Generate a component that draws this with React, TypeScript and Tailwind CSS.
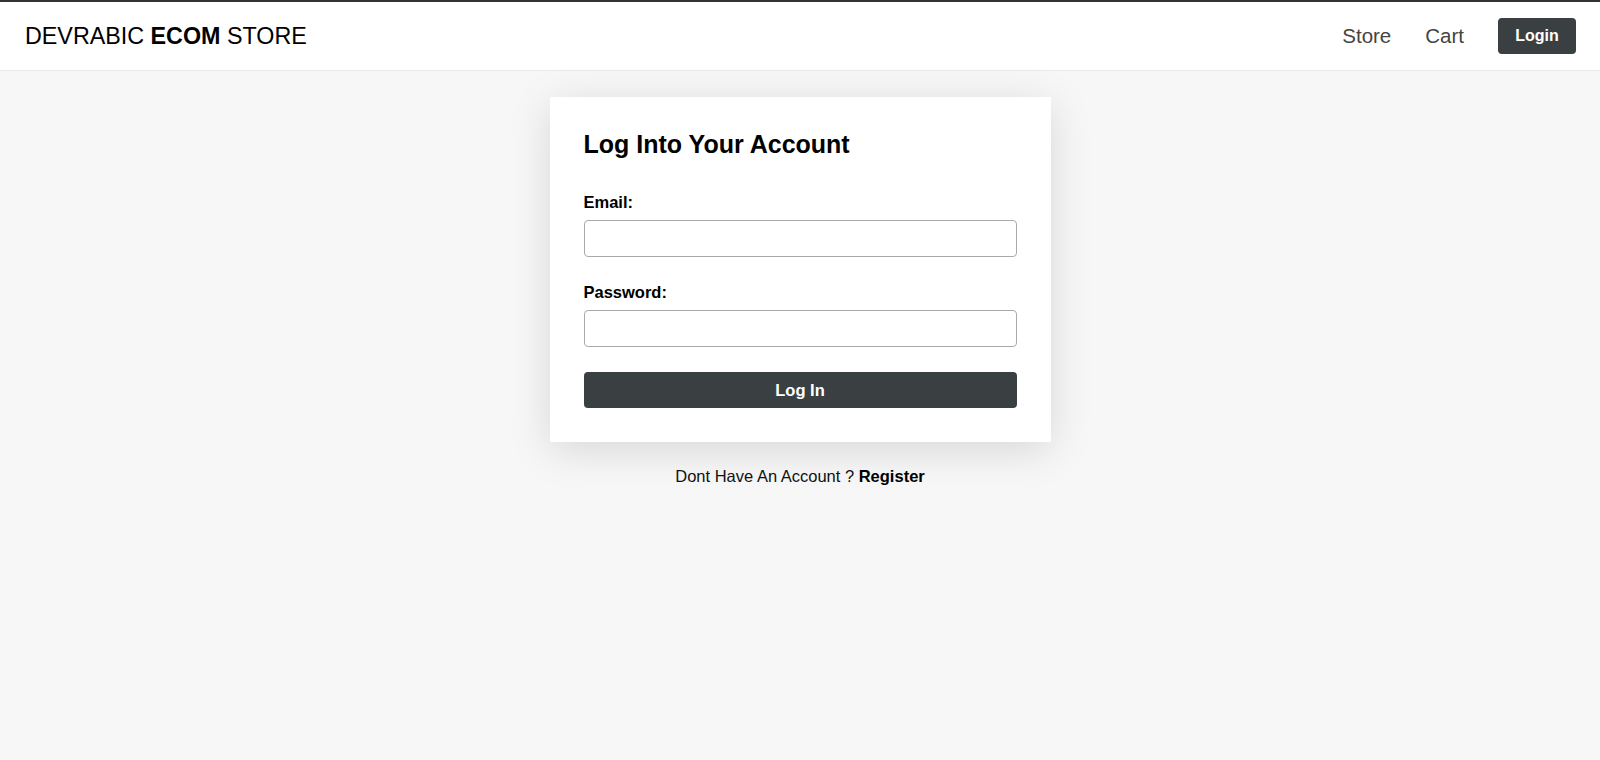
import React from "react";

export default function App() {
  return (
    <div className="min-h-[760px] bg-[#f7f7f7] text-black" style={{ fontFamily: '"Liberation Sans", Arial, sans-serif' }}>
      <header className="h-[71px] bg-white border-t-2 border-t-[#333] border-b border-b-[#eaeaea] flex items-center justify-between px-[24px]">
        <div className="text-[23.3px] leading-[28px] text-black pl-[1px]">
          DEVRABIC <span className="font-bold">ECOM</span> STORE
        </div>
        <nav className="flex items-center gap-[34px]">
          <a className="text-[20.5px] leading-[24px] text-[#444]">Store</a>
          <a className="text-[20.5px] leading-[24px] text-[#444]">Cart</a>
          <button className="w-[78px] h-[36px] rounded-[4px] bg-[#3a3f42] text-white font-bold text-[16px] leading-[18px]">
            Login
          </button>
        </nav>
      </header>
      <main className="flex flex-col items-center pt-[26px]">
        <div className="w-[501px] bg-white px-[34px] pt-[32px] pb-[34px] shadow-[0_8px_40px_rgba(0,0,0,0.13)]">
          <h2 className="text-[25px] leading-[30px] font-bold">Log Into Your Account</h2>
          <label className="block mt-[34px] text-[16.5px] leading-[18px] font-bold">Email:</label>
          <input className="block mt-[9px] w-full h-[37px] rounded-[4px] border border-[#aaa] bg-white" />
          <label className="block mt-[26px] text-[16.5px] leading-[18px] font-bold">Password:</label>
          <input type="password" className="block mt-[9px] w-full h-[37px] rounded-[4px] border border-[#aaa] bg-white" />
          <button className="mt-[25px] w-full h-[36px] rounded-[4px] bg-[#3a3f42] text-white font-bold text-[16.5px] leading-[18px]">
            Log In
          </button>
        </div>
        <p className="mt-[25px] text-[16.5px] leading-[19px] text-[#111]">
          Dont Have An Account ? <span className="font-bold text-black">Register</span>
        </p>
      </main>
    </div>
  );
}
